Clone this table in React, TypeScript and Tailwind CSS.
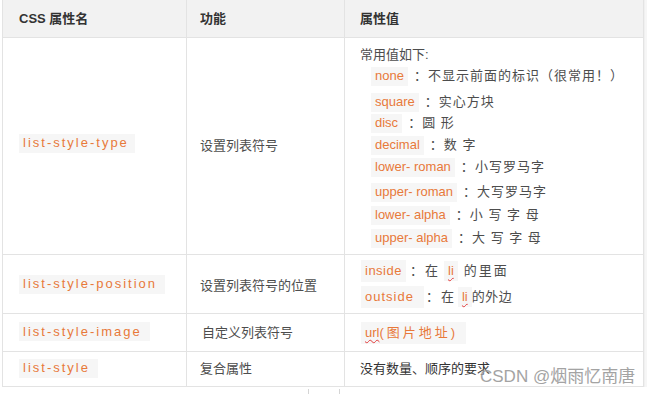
import React from "react";

const cjk = { fontFamily: '"Liberation Sans", "Noto Sans CJK SC", sans-serif' };

function Code({ children, className = "" }: { children: React.ReactNode; className?: string }) {
  return (
    <span className={"inline-flex items-center bg-[#f6f6f6] text-[#e8793a] h-[19px] px-[4px] " + className}>
      {children}
    </span>
  );
}

function Li({ className = "" }: { className?: string }) {
  return (
    <span className={"inline-flex items-center bg-[#f6f6f6] h-[20px] px-[4px] text-[#e8793a] underline decoration-wavy decoration-[#e23b3b] decoration-1 underline-offset-2 " + className}>
      li
    </span>
  );
}

const items: { code: string; desc: string; mt: string }[] = [
  { code: "none", desc: "不显示前面的标识（很常用！）", mt: "mt-[1px]" },
  { code: "square", desc: "实心方块", mt: "mt-[6px]" },
  { code: "disc", desc: "圆 形", mt: "mt-[1px]" },
  { code: "decimal", desc: "数 字", mt: "mt-[2px]" },
  { code: "lower- roman", desc: "小写罗马字", mt: "mt-[2px]" },
  { code: "upper- roman", desc: "大写罗马字", mt: "mt-[5px]" },
  { code: "lower- alpha", desc: "小 写 字 母", mt: "mt-[3px]" },
  { code: "upper- alpha", desc: "大 写 字 母", mt: "mt-[3px]" },
];

export default function App() {
  return (
    <div className="relative w-[650px] h-[394px] bg-white overflow-hidden text-[13px] text-[#4d4d4d]" style={cjk}>
      <div className="ml-[2px] w-[642px] border-l border-r border-[#e3e3e3] shadow-[1px_0_0_#f0f0f0,3px_0_0_#f6f6f6]">
        {/* header */}
        <div className="flex h-[38px] bg-[#f2f2f2] border-b border-[#e3e3e3] font-bold text-[#333]">
          <div className="w-[184px] flex items-center pl-[16px] border-r border-[#e3e3e3]">CSS 属性名</div>
          <div className="w-[158px] flex items-center pl-[13px] border-r border-[#e3e3e3]">功能</div>
          <div className="flex-1 flex items-center pl-[15px]">属性值</div>
        </div>

        {/* row 1 */}
        <div className="flex h-[217px] border-b border-[#e3e3e3]">
          <div className="w-[184px] flex items-center pl-[16px] pb-[6px] border-r border-[#e3e3e3]">
            <Code className="tracking-[2px] pr-[6px]">list-style-type</Code>
          </div>
          <div className="w-[158px] flex items-center pl-[13px] border-r border-[#e3e3e3]">设置列表符号</div>
          <div className="flex-1 flex flex-col pl-[15px] pt-[7px]">
            <div className="h-[20px] flex items-center">常用值如下:</div>
            {items.map((it) => (
              <div key={it.code} className={"h-[20px] flex items-center pl-[11px] " + it.mt}>
                <Code>{it.code}</Code>
                <span className="ml-[6px] tracking-[1px]">：{it.desc}</span>
              </div>
            ))}
          </div>
        </div>

        {/* row 2 */}
        <div className="flex h-[59px] border-b border-[#e3e3e3]">
          <div className="w-[184px] flex items-center pl-[16px] border-r border-[#e3e3e3]">
            <Code className="tracking-[2px] pr-[8px]">list-style-position</Code>
          </div>
          <div className="w-[158px] flex items-center pl-[13px] pt-[4px] border-r border-[#e3e3e3]">设置列表符号的位置</div>
          <div className="flex-1 flex flex-col justify-center pl-[16px] gap-[4px]">
            <div className="h-[22px] flex items-center">
              <Code className="h-[22px] tracking-[0.5px]">inside</Code>
              <span className="ml-[4px]">：</span>
              <span className="ml-[2px]">在</span>
              <Li className="ml-[6px]" />
              <span className="ml-[6px] tracking-[2px]">的里面</span>
            </div>
            <div className="h-[22px] flex items-center">
              <Code className="h-[22px] tracking-[1px] pr-[10px]">outside</Code>
              <span className="ml-[2px]">：</span>
              <span className="ml-[2px]">在</span>
              <Li className="ml-[4px]" />
              <span className="tracking-[0.5px]">的外边</span>
            </div>
          </div>
        </div>

        {/* row 3 */}
        <div className="flex h-[38px] border-b border-[#e3e3e3]">
          <div className="w-[184px] flex items-center pl-[16px] pb-[2px] border-r border-[#e3e3e3]">
            <Code className="tracking-[2px] pr-[8px]">list-style-image</Code>
          </div>
          <div className="w-[158px] flex items-center pl-[15px] border-r border-[#e3e3e3]">自定义列表符号</div>
          <div className="flex-1 flex items-center pl-[16px]">
            <Code className="h-[22px] pr-[8px]">
              <span className="underline decoration-wavy decoration-[#e23b3b] decoration-1 underline-offset-2">url</span>
              <span className="tracking-[3px]">(图片地址)</span>
            </Code>
          </div>
        </div>

        {/* row 4 */}
        <div className="flex h-[35px] border-b border-[#e3e3e3]">
          <div className="w-[184px] flex items-center pl-[16px] pb-[2px] border-r border-[#e3e3e3]">
            <Code className="tracking-[2px] pr-[8px]">list-style</Code>
          </div>
          <div className="w-[158px] flex items-center pl-[13px] border-r border-[#e3e3e3]">复合属性</div>
          <div className="flex-1 flex items-center pl-[15px] text-[#333]">没有数量、顺序的要求</div>
        </div>
      </div>
      <div className="ml-[308px] mt-[2px] w-[32px] h-[6px] border-l border-r border-[#d5d5d5]"></div>

      <div className="absolute left-[480px] top-[366px] text-[17px] leading-[22px] text-[#9a9a9a] opacity-90 [text-shadow:0_0_2px_#ffffff]">
        CSDN @烟雨忆南唐
      </div>
    </div>
  );
}
